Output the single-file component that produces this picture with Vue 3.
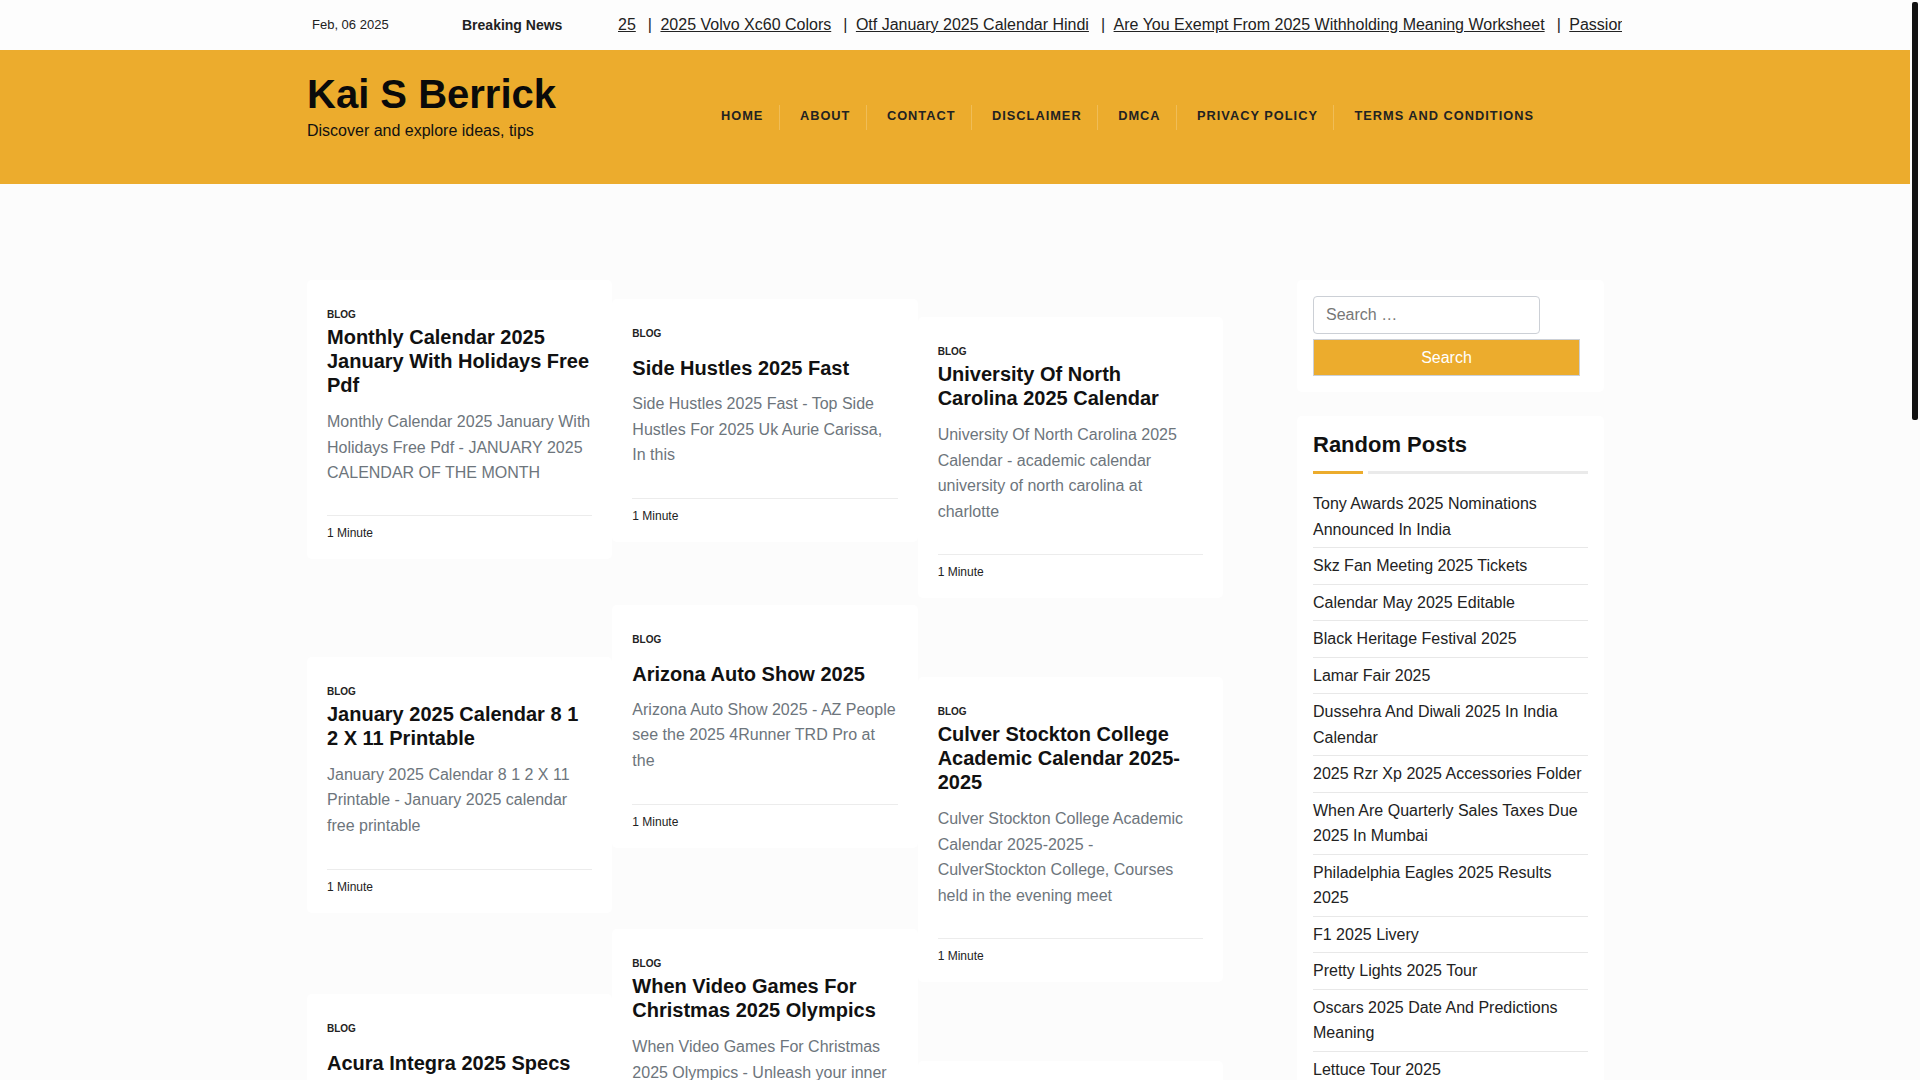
<template>
    <div class="page">
        <div class="topbar">
            <div class="container topbar-inner">
                <span class="date">Feb, 06 2025</span>
                <span class="breaking">Breaking News</span>
                <div class="ticker">
                    <template v-for="(item, index) in ticker" :key="item">
                        <span v-if="index > 0" class="ticker-sep">|</span>
                        <a href="#">{{ item }}</a>
                    </template>
                </div>
            </div>
        </div>

        <header class="site-header">
            <div class="container header-inner">
                <div class="branding">
                    <h1 class="site-title">Kai S Berrick</h1>
                    <p class="site-desc">Discover and explore ideas, tips</p>
                </div>
                <ul class="nav">
                    <li v-for="link in navLinks" :key="link"><a href="#">{{ link }}</a></li>
                </ul>
            </div>
        </header>

        <div class="container content">
            <main class="posts">
                <div v-for="(col, colIndex) in columns" :key="colIndex" class="post-col" :class="`col-${colIndex + 1}`">
                    <article v-for="post in col" :key="post.title" class="card" :class="{ short: post.short }">
                        <div class="cat">Blog</div>
                        <h2 class="card-title">{{ post.title }}</h2>
                        <p class="excerpt">{{ post.excerpt }}</p>
                        <div class="meta">1 Minute</div>
                    </article>
                </div>
            </main>

            <aside class="sidebar">
                <div class="widget search-widget">
                    <input class="search-input" type="text" placeholder="Search …" />
                    <button class="search-btn" type="button">Search</button>
                </div>
                <div class="widget">
                    <h3 class="widget-title">Random Posts</h3>
                    <ul class="random-list">
                        <li v-for="item in randomPosts" :key="item"><a href="#">{{ item }}</a></li>
                    </ul>
                </div>
            </aside>
        </div>

        <!-- the site's custom scrollbar, headless chrome hides the real one -->
        <div class="scrollbar"><div class="scrollbar-thumb"></div></div>
    </div>
</template>

<script setup>
const ticker = [
    "25",
    "2025 Volvo Xc60 Colors",
    "Otf January 2025 Calendar Hindi",
    "Are You Exempt From 2025 Withholding Meaning Worksheet",
    "Passion Tour 2025 Setlist",
];

const navLinks = ["Home", "About", "Contact", "Disclaimer", "DMCA", "Privacy Policy", "Terms and Conditions"];

const columns = [
    [
        {
            title: "Monthly Calendar 2025 January With Holidays Free Pdf",
            excerpt: "Monthly Calendar 2025 January With Holidays Free Pdf - JANUARY 2025 CALENDAR OF THE MONTH",
        },
        {
            title: "January 2025 Calendar 8 1 2 X 11 Printable",
            excerpt: "January 2025 Calendar 8 1 2 X 11 Printable - January 2025 calendar free printable",
        },
        {
            title: "Acura Integra 2025 Specs",
            excerpt: "Acura Integra 2025 Specs - The 2025 Acura Integra is a compact luxury",
            short: true,
        },
    ],
    [
        {
            title: "Side Hustles 2025 Fast",
            excerpt: "Side Hustles 2025 Fast - Top Side Hustles For 2025 Uk Aurie Carissa, In this",
            short: true,
        },
        {
            title: "Arizona Auto Show 2025",
            excerpt: "Arizona Auto Show 2025 - AZ People see the 2025 4Runner TRD Pro at the",
            short: true,
        },
        {
            title: "When Video Games For Christmas 2025 Olympics",
            excerpt: "When Video Games For Christmas 2025 Olympics - Unleash your inner",
        },
    ],
    [
        {
            title: "University Of North Carolina 2025 Calendar",
            excerpt: "University Of North Carolina 2025 Calendar - academic calendar university of north carolina at charlotte",
        },
        {
            title: "Culver Stockton College Academic Calendar 2025-2025",
            excerpt: "Culver Stockton College Academic Calendar 2025-2025 - CulverStockton College, Courses held in the evening meet",
        },
        {
            title: "Next Post",
            excerpt: "Below the fold",
            short: true,
        },
    ],
];

const randomPosts = [
    "Tony Awards 2025 Nominations Announced In India",
    "Skz Fan Meeting 2025 Tickets",
    "Calendar May 2025 Editable",
    "Black Heritage Festival 2025",
    "Lamar Fair 2025",
    "Dussehra And Diwali 2025 In India Calendar",
    "2025 Rzr Xp 2025 Accessories Folder",
    "When Are Quarterly Sales Taxes Due 2025 In Mumbai",
    "Philadelphia Eagles 2025 Results 2025",
    "F1 2025 Livery",
    "Pretty Lights 2025 Tour",
    "Oscars 2025 Date And Predictions Meaning",
    "Lettuce Tour 2025",
];
</script>

<style scoped>
.page {
    width: 1910px;
    height: 1080px;
    overflow: hidden;
    font-family: "Liberation Sans", Arial, sans-serif;
    color: #111;
    background: #fcfcfc;
}

.container {
    width: 1297px;
    margin-left: 307px;
}

/* top strip */
.topbar {
    height: 50px;
    background: #fdfdfd;
}

.topbar-inner {
    display: flex;
    align-items: center;
    height: 100%;
}

.date {
    flex: none;
    width: 155px;
    padding: 0 0 2px 5px;
    box-sizing: border-box;
    font-size: 13px;
    color: #222;
}

.breaking {
    flex: none;
    width: 156px;
    padding-bottom: 1px;
    font-size: 14px;
    font-weight: 700;
    color: #222;
}

.ticker {
    flex: none;
    width: 1004px;
    padding-bottom: 1px;
    overflow: hidden;
    white-space: nowrap;
    font-size: 16px;
    color: #222;
}

.ticker a {
    color: #222;
    text-decoration: underline;
}

.ticker-sep {
    margin: 0 8.5px 0 12px;
}

/* header */
.site-header {
    height: 134px;
    background: #ecac2d;
}

.header-inner {
    display: flex;
    align-items: center;
    height: 100%;
}

.branding {
    align-self: flex-start;
    flex: none;
    width: 394px;
    padding-top: 21px;
}

.site-title {
    margin: 0;
    font-size: 40px;
    line-height: 46px;
    font-weight: 700;
    color: #0a0a0a;
}

.site-desc {
    margin: 2px 0 0;
    font-size: 16px;
    line-height: 24px;
    color: #111;
}

.nav {
    display: flex;
    flex: none;
    margin: 0;
    padding: 0;
    list-style: none;
}

.nav li {
    height: 25px;
    padding: 0 15.5px 0 20px;
    border-right: 1px solid #f0bd57;
}

.nav li:last-child {
    border-right: none;
}

.nav a {
    display: block;
    margin-top: -1px;
    font-size: 12.8px;
    line-height: 24px;
    font-weight: 700;
    letter-spacing: 1px;
    text-transform: uppercase;
    color: #222;
    text-decoration: none;
}

/* posts */
.content {
    display: flex;
    justify-content: space-between;
    align-items: flex-start;
    padding-top: 96px;
}

.posts {
    display: flex;
    width: 916px;
}

.post-col {
    flex: 1;
}

.col-2 {
    padding-top: 19px;
}

.col-3 {
    padding-top: 37px;
}

/* masonry gaps are uneven on the original */
.col-1 .card + .card {
    margin-top: 98px;
}

.col-1 .card:nth-child(3) {
    margin-top: 81px;
}

.col-2 .card + .card {
    margin-top: 63px;
}

.col-2 .card:nth-child(3) {
    margin-top: 81px;
}

.col-3 .card + .card {
    margin-top: 79px;
}

.card {
    padding: 29px 20px 0;
    background: #fff;
    border-radius: 5px;
}

.cat {
    font-size: 10px;
    line-height: 12px;
    font-weight: 700;
    text-transform: uppercase;
    color: #222;
}

.card-title {
    margin: 4px 0 0;
    font-size: 20px;
    line-height: 24px;
    font-weight: 700;
    color: #111;
}

.card.short .card-title {
    margin-top: 16px;
}

.excerpt {
    margin: 12px 0 0;
    font-size: 16px;
    line-height: 25.5px;
    color: #6d757c;
}

.card.short .excerpt {
    margin-top: 11px;
}

.meta {
    margin-top: 29px;
    padding: 10px 0 19px;
    border-top: 1px solid #ececec;
    font-size: 12px;
    line-height: 14px;
    color: #222;
}

.card.short .meta {
    margin-top: 30px;
}

.col-3 .meta {
    margin-top: 30px;
}

.col-1 .card:nth-child(2) .meta,
.col-2 .card:nth-child(2) .meta {
    margin-top: 31px;
}

/* sidebar */
.sidebar {
    width: 307px;
}

.widget {
    padding: 16px;
    background: #fff;
    border-radius: 5px;
}

.widget + .widget {
    margin-top: 24px;
}

.search-input {
    display: block;
    width: 227px;
    height: 38px;
    box-sizing: border-box;
    padding: 0 12px;
    border: 1px solid #ccd0d6;
    border-radius: 4px;
    background: #fff;
    font-family: inherit;
    font-size: 16px;
    color: #333;
    outline: none;
}

.search-input::placeholder {
    color: #777;
}

.search-btn {
    display: block;
    width: 267px;
    height: 37px;
    margin-top: 5px;
    box-sizing: border-box;
    border: 1px solid #ccd0d6;
    background: #ecac2d;
    font-family: inherit;
    font-size: 16px;
    color: #fff;
}

.widget-title {
    position: relative;
    margin: 0;
    padding-bottom: 13px;
    border-bottom: 3px solid #eaeaea;
    font-size: 22px;
    line-height: 26px;
    font-weight: 700;
    color: #111;
}

.widget-title::after {
    content: "";
    position: absolute;
    left: 0;
    bottom: -3px;
    width: 50px;
    height: 3px;
    border-right: 5px solid #fff;
    background: #ecac2d;
}

.random-list {
    margin: 12px 0 0;
    padding: 0;
    list-style: none;
}

.random-list li {
    padding: 5px 0;
    border-bottom: 1px solid #e8e8e8;
    font-size: 16px;
    line-height: 25.5px;
}

.random-list a {
    color: #222;
    text-decoration: none;
}

/* scrollbar */
.scrollbar {
    position: fixed;
    top: 0;
    right: 0;
    bottom: 0;
    width: 10px;
    background: #fcfcfc;
}

.scrollbar-thumb {
    width: 6px;
    height: 418px;
    margin: 2px 0 0 2px;
    border-radius: 2px;
    background: #111;
}
</style>

<style>
html,
body {
    margin: 0;
    overflow: hidden;
    background: #fcfcfc;
}
</style>
